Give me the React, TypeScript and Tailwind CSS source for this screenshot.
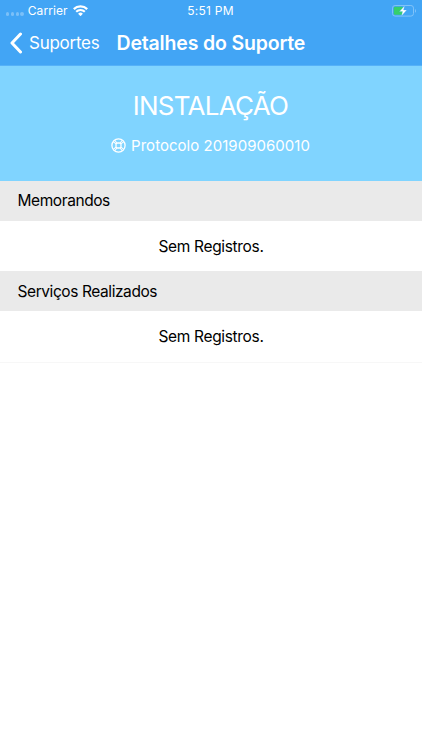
const sections = [
  { title: "Memorandos", empty: "Sem Registros." },
  { title: "Serviços Realizados", empty: "Sem Registros." },
];

function WifiIcon() {
  return (
    <svg className="h-[11px] w-[15px]" viewBox="0 0 15 11" fill="none" stroke="white">
      <path d="M0.8 4.1a9.5 9.5 0 0 1 13.4 0" strokeWidth="2.3" />
      <path d="M3.2 6.8a6 6 0 0 1 8.6 0" strokeWidth="2.1" />
      <path d="M5.1 8.8a3.3 3.3 0 0 1 4.8 0L7.5 11.2z" fill="white" stroke="none" />
    </svg>
  );
}

function BatteryIcon() {
  return (
    <svg className="h-3 w-[25px]" viewBox="0 0 25 12">
      <rect x="0.5" y="0.5" width="21" height="10.6" rx="2.6" fill="none" stroke="#80c3f9" />
      <rect x="1.8" y="1.8" width="9.2" height="8" rx="1.2" fill="#36cf6b" />
      <path d="M23 4v3.8c1.4-.7 1.4-3.1 0-3.8z" fill="#80c3f9" />
      <path d="M12.6 0.8 7.4 6.6h3.1l-1 4.4 5.3-6h-3.2z" fill="white" stroke="#42a5f5" strokeWidth="0.3" />
    </svg>
  );
}

function BuoyIcon() {
  return (
    <svg className="mb-0.5 size-[15px]" viewBox="0 0 15 15" fill="none" stroke="white" strokeWidth="1.3">
      <circle cx="7.5" cy="7.5" r="6.6" />
      <rect x="5" y="5" width="5" height="5" rx="1.6" />
      <path
        d="M2.5 3.9 5 5.9M3.9 2.5 5.9 5M11.1 2.5 9.1 5M12.5 3.9 10 5.9M12.5 11.1 10 9.1M11.1 12.5 9.1 10M3.9 12.5 5.9 10M2.5 11.1 5 9.1"
        strokeWidth="1.1"
      />
    </svg>
  );
}

function StatusBar() {
  return (
    <div className="grid h-5 grid-cols-3 items-center pt-px text-[12px] leading-none">
      <div className="flex items-center pl-1.5">
        <div className="flex gap-[1.5px] pt-[7px]">
          {[0, 1, 2, 3].map((dot) => (
            <span key={dot} className="size-[3.3px] rounded-full bg-white/30" />
          ))}
        </div>
        <span className="ml-1 tracking-[0.1px]">Carrier</span>
        <span className="ml-[5px]">
          <WifiIcon />
        </span>
      </div>
      <span className="pr-px text-center tracking-[0.25px]">5:51 PM</span>
      <div className="flex justify-end pr-[5px]">
        <BatteryIcon />
      </div>
    </div>
  );
}

export default function App() {
  return (
    <div className="min-h-screen bg-white font-['Inter','Liberation_Sans',sans-serif] text-black">
      <header className="h-[66px] border-b border-[#55b1f8] bg-[#42a5f5] text-white">
        <StatusBar />
        <div className="flex h-[46px] items-center pl-2.5">
          <button className="flex items-center gap-[7px] text-[17px]">
            <svg className="h-[22px] w-3" viewBox="0 0 12 22" fill="none" stroke="white" strokeWidth="3">
              <path d="M10.5 2 2 11l8.5 9" strokeLinecap="round" strokeLinejoin="round" />
            </svg>
            <span className="pt-0.5 tracking-[-0.25px]">Suportes</span>
          </button>
          <h1 className="ml-[17px] pt-px text-[19.5px] font-semibold tracking-[-0.17px]">
            Detalhes do Suporte
          </h1>
        </div>
      </header>

      <div className="flex h-[115px] flex-col items-center bg-[#80d4ff] pt-[22px] text-white">
        <h2 className="pr-px text-[26px] leading-9 font-normal tracking-[-0.75px]">INSTALAÇÃO</h2>
        <p className="mt-2.5 flex items-center gap-[5px] pr-px text-[15px] leading-6 tracking-[0.03px]">
          <BuoyIcon />
          Protocolo 201909060010
        </p>
      </div>

      <div className="border-b border-[#f7f7f7] text-[15.5px]">
        {sections.map((section) => (
          <section key={section.title}>
            <h3 className="flex h-10 items-center bg-[#eaeaea] pl-[17.5px] tracking-[-0.42px]">
              {section.title}
            </h3>
            <p className="flex h-[50.3px] items-center justify-center pt-[0.6px] tracking-[-0.33px]">
              {section.empty}
            </p>
          </section>
        ))}
      </div>
    </div>
  );
}
